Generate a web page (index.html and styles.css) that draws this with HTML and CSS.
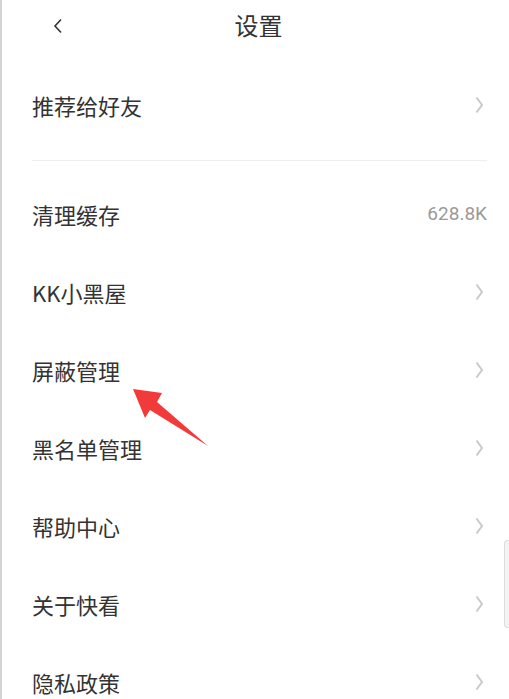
FILE: index.html
```html
<!DOCTYPE html>
<html lang="zh">
<head>
<meta charset="utf-8">
<link rel="stylesheet" href="styles.css">
</head>
<body>
<div class="page">
  <header class="header">
    <svg class="back" width="10" height="16" viewBox="0 0 10 16"><path d="M8 1.5 L2 8 L8 14.5" fill="none" stroke="#333" stroke-width="1.6"/></svg>
    <h1 class="title">设置</h1>
  </header>
  <div class="group first">
    <div class="row"><span class="label">推荐给好友</span><svg class="chev" width="9" height="18" viewBox="0 0 9 18"><path d="M1.5 1.5 L7 9 L1.5 16.5" fill="none" stroke="#c9c9c9" stroke-width="2"/></svg></div>
  </div>
  <div class="group">
    <div class="row"><span class="label">清理缓存</span><span class="value">628.8K</span></div>
    <div class="row"><span class="label">KK小黑屋</span><svg class="chev" width="9" height="18" viewBox="0 0 9 18"><path d="M1.5 1.5 L7 9 L1.5 16.5" fill="none" stroke="#c9c9c9" stroke-width="2"/></svg></div>
    <div class="row"><span class="label">屏蔽管理</span><svg class="chev" width="9" height="18" viewBox="0 0 9 18"><path d="M1.5 1.5 L7 9 L1.5 16.5" fill="none" stroke="#c9c9c9" stroke-width="2"/></svg></div>
    <div class="row"><span class="label">黑名单管理</span><svg class="chev" width="9" height="18" viewBox="0 0 9 18"><path d="M1.5 1.5 L7 9 L1.5 16.5" fill="none" stroke="#c9c9c9" stroke-width="2"/></svg></div>
    <div class="row"><span class="label">帮助中心</span><svg class="chev" width="9" height="18" viewBox="0 0 9 18"><path d="M1.5 1.5 L7 9 L1.5 16.5" fill="none" stroke="#c9c9c9" stroke-width="2"/></svg></div>
    <div class="row"><span class="label">关于快看</span><svg class="chev" width="9" height="18" viewBox="0 0 9 18"><path d="M1.5 1.5 L7 9 L1.5 16.5" fill="none" stroke="#c9c9c9" stroke-width="2"/></svg></div>
    <div class="row"><span class="label">隐私政策</span><svg class="chev" width="9" height="18" viewBox="0 0 9 18"><path d="M1.5 1.5 L7 9 L1.5 16.5" fill="none" stroke="#c9c9c9" stroke-width="2"/></svg></div>
  </div>
  <svg class="pointer" width="80" height="62" viewBox="130 386 80 62"><path d="M133 389 L162 393 L157 402 L208 446 L150 410 L145 418 Z" fill="#f23a3a"/></svg>
  <div class="scrollbar"></div>
</div>
</body>
</html>
```
FILE: styles.css
```css
html, body {
  margin: 0;
  padding: 0;
  background: #fff;
}
body {
  font-family: "Noto Sans CJK SC", "Noto Sans", sans-serif;
  color: #333;
}
.page {
  position: relative;
  width: 507px;
  height: 699px;
  overflow: hidden;
  border-left: 2px solid #d4d4d4;
  background: #fff;
}
.header {
  position: relative;
  height: 55px;
  display: flex;
  align-items: center;
  justify-content: center;
}
.back {
  position: absolute;
  left: 51px;
  top: 18px;
}
.title {
  margin: 0 0 0 6px;
  padding-bottom: 6px;
  font-size: 24px;
  font-weight: 400;
  color: #333;
  line-height: 1;
}
.group {
  margin-left: 30px;
  margin-right: 22px;
}
.group.first {
  border-bottom: 1px solid #efefef;
}
.group.first .row {
  height: 105px;
}
.group:not(.first) {
  padding-top: 16px;
}
.row {
  height: 78px;
  box-sizing: border-box;
  padding-bottom: 5px;
  display: flex;
  align-items: center;
  justify-content: space-between;
}
.label {
  font-size: 22px;
  color: #333;
  line-height: 1;
}
.value {
  font-size: 19px;
  color: #9a9a9a;
  line-height: 1;
  font-family: "Roboto", "Noto Sans", sans-serif;
}
.chev {
  margin-right: 3px;
}
.pointer {
  position: absolute;
  left: 128px;
  top: 386px;
}
.scrollbar {
  position: absolute;
  right: 0;
  top: 540px;
  width: 4px;
  height: 86px;
  border: 1px solid #dcdcdc;
  border-right: none;
  border-radius: 4px 0 0 4px;
  background: #f4f4f4;
}
```
